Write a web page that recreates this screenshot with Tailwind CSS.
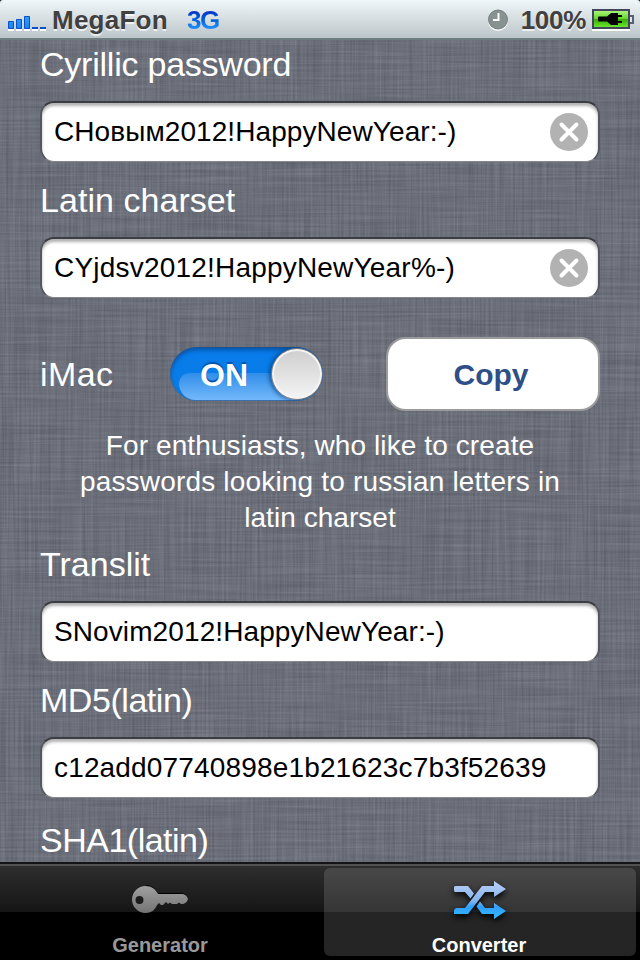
<!DOCTYPE html>
<html lang="en">
<head>
<meta charset="utf-8">
<title>Converter</title>
<script src="https://cdn.jsdelivr.net/npm/@tailwindcss/browser@4"></script>
</head>
<body class="bg-black font-['Liberation_Sans',Arial,sans-serif]">
<div class="relative flex h-[960px] w-[640px] flex-col overflow-hidden bg-[#6b6e79]">
  <!-- linen texture -->
  <svg class="absolute inset-0" width="640" height="960" aria-hidden="true">
    <filter id="weft" x="0" y="0" width="100%" height="100%" color-interpolation-filters="sRGB">
      <feTurbulence type="fractalNoise" baseFrequency="0.012 0.45" numOctaves="2" seed="4"/>
      <feColorMatrix values="1 0 0 0 0  1 0 0 0 0  1 0 0 0 0  0 0 0 0 1"/>
      <feComponentTransfer><feFuncR type="linear" slope=".22" intercept=".314"/><feFuncG type="linear" slope=".22" intercept=".328"/><feFuncB type="linear" slope=".22" intercept=".37"/></feComponentTransfer>
    </filter>
    <filter id="warp" x="0" y="0" width="100%" height="100%" color-interpolation-filters="sRGB">
      <feTurbulence type="fractalNoise" baseFrequency="0.45 0.01" numOctaves="2" seed="9"/>
      <feColorMatrix values="1 0 0 0 0  1 0 0 0 0  1 0 0 0 0  0 0 0 0 1"/>
      <feComponentTransfer><feFuncR type="linear" slope=".22" intercept=".314"/><feFuncG type="linear" slope=".22" intercept=".328"/><feFuncB type="linear" slope=".22" intercept=".37"/></feComponentTransfer>
    </filter>
    <rect width="640" height="960" filter="url(#weft)"/>
    <rect width="640" height="960" filter="url(#warp)" opacity=".5"/>
  </svg>

  <header class="relative flex h-10 shrink-0 items-center border-b-2 border-[#6f7c80] bg-linear-to-b from-[#f0f7fa] to-[#bcc5c9] text-[26px] font-bold leading-[38px] text-[#404040] [text-shadow:0_2px_0_#ffffffb0]">
    <svg class="absolute left-0 top-0" width="640" height="4"><path d="M0 0H3Q0 0 0 3zM640 0H637Q640 0 640 3z" fill="#222"/></svg>
    <svg class="ml-2 mt-[8px] shrink-0" width="40" height="20" viewBox="0 0 40 20">
      <defs><linearGradient id="sig" x2="0" y2="1"><stop stop-color="#2f9dff"/><stop offset="1" stop-color="#1b83ee"/></linearGradient></defs>
      <path d="M0 17h6M8 17h6M16 17h6M24 17h6M32 17h6" stroke="#fff" stroke-width="2"/>
      <g fill="url(#sig)" stroke="#0750c8"><path d="M.5 8.500h5v7h-5zM8.500 6.500h5v9h-5zM16.500 3.500h5v12h-5z"/></g>
      <path d="M24 15h6M32 15h6" stroke="#0b4fd0" stroke-width="2"/>
    </svg>
    <span class="ml-1 mt-[2px] w-[135px] tracking-[.25px]">MegaFon</span>
    <span class="mt-[2px] bg-linear-to-b from-[#0638c8] from-30% to-[#2b9cff] to-80% bg-clip-text pr-1 font-bold tracking-[-1.5px] text-transparent [text-shadow:none]">3G</span>
    <div class="ml-auto mr-[6px] flex h-full items-center">
      <svg class="mt-[2px]" width="22" height="24" viewBox="0 0 22 24">
        <circle cx="11" cy="13" r="10" fill="#fff"/><circle cx="11" cy="11.500" r="9.500" fill="#869391" stroke="#737f7e"/>
        <path d="M11.500 5v7H6" fill="none" stroke="#fff" stroke-width="2"/>
      </svg>
      <span class="ml-[12px] mt-[1px] tracking-[-.3px]">100%</span>
      <svg class="ml-[6px] mt-[2px]" width="42" height="22" viewBox="0 0 42 22">
        <defs><linearGradient id="bat" x2="0" y2="1"><stop stop-color="#b5f582"/><stop offset=".48" stop-color="#63d92b"/><stop offset=".5" stop-color="#35a909"/><stop offset="1" stop-color="#70ed2c"/></linearGradient></defs>
        <path d="M0 21h38" stroke="#fff" stroke-width="2"/>
        <rect x="1" y="1" width="36" height="18" fill="url(#bat)" stroke="#41465e" stroke-width="2"/>
        <path d="M38 7h3v7h-3" fill="#dfe6e9" stroke="#596074" stroke-width="2"/>
        <path d="M6 8.500q0-1 1-1h8l4-3.500h7v2h4v2h-4v4h4v2h-4v2h-7l-4-3.500H7q-1 0-1-1z" fill="#000"/>
      </svg>
    </div>
  </header>

  <main class="relative flex min-h-0 flex-1 flex-col overflow-hidden px-10 pt-1 text-white">
    <label class="h-10 shrink-0 text-[34px] leading-10 tracking-[-.23px]">Cyrillic password</label>
    <div class="mb-[18px] mt-[17px] flex h-[61px] shrink-0 items-center justify-between rounded-[14px] border-2 border-b border-[#55575f] border-b-[#85878c] border-t-[#3c3d43] bg-white pl-3 pr-[10px] text-[28px] leading-[56px] tracking-[.08px] text-black shadow-[inset_0_3px_3px_#0000004d]">
      <span>СНовым2012!HappyNewYear:-)</span>
      <svg width="38" height="38" viewBox="0 0 38 38"><circle cx="19" cy="19" r="19" fill="#b2b2b2"/><path d="M11.500 11.500l15 15m0-15l-15 15" stroke="#fff" stroke-width="4" stroke-linecap="round"/></svg>
    </div>

    <label class="h-10 shrink-0 text-[34px] leading-10 tracking-[.05px]">Latin charset</label>
    <div class="mt-[17px] flex h-[61px] shrink-0 items-center justify-between rounded-[14px] border-2 border-b border-[#55575f] border-b-[#85878c] border-t-[#3c3d43] bg-white pl-3 pr-[10px] text-[28px] leading-[56px] tracking-[.2px] text-black shadow-[inset_0_3px_3px_#0000004d]">
      <span>CYjdsv2012!HappyNewYear%-)</span>
      <svg width="38" height="38" viewBox="0 0 38 38"><circle cx="19" cy="19" r="19" fill="#b2b2b2"/><path d="M11.500 11.500l15 15m0-15l-15 15" stroke="#fff" stroke-width="4" stroke-linecap="round"/></svg>
    </div>

    <div class="mt-[39px] flex h-[74px] shrink-0 items-center">
      <span class="w-[130px] text-[34px] leading-10 tracking-[.4px]">iMac</span>
      <div class="relative h-[54px] w-[153px] overflow-hidden rounded-full bg-[#087ce8] shadow-[inset_0_3px_4px_#003f8fb0,inset_0_0_2px_1px_#52708f]">
        <div class="absolute bottom-[1px] left-[9px] h-[27px] w-[120px] rounded-bl-[22px] rounded-tl-[14px] bg-linear-to-b from-[#2d8eea] to-[#72b8fa]"></div>
        <span class="absolute left-[30px] top-0 text-[32px] font-bold leading-[56px] [text-shadow:0_-2px_1px_#0055a8]">ON</span>
        <div class="absolute right-0 top-[1px] size-[52px] rounded-full border border-[#77797e] bg-linear-to-b from-[#cecece] to-[#f5f5f5] shadow-[inset_0_0_0_2px_#f5f5f5,-2px_0_4px_#003878b0]"></div>
      </div>
      <button class="ml-auto h-[74px] w-[214px] rounded-[20px] border-2 border-[#9b9b9b] bg-white pt-[1px] text-[30px] font-bold text-[#2e4f88]"><span class="relative -left-[2px]">Copy</span></button>
    </div>

    <p class="-mx-2 mt-[17px] text-center text-[28px] leading-9 tracking-[.18px]"><span class="tracking-[.1px]">For enthusiasts, who like to create</span><br>passwords looking to russian letters in<br><span class="tracking-[.05px]">latin charset</span></p>

    <label class="mt-[8px] h-10 shrink-0 text-[34px] leading-10">Translit</label>
    <div class="mb-[18px] mt-[17px] flex h-[61px] shrink-0 items-center rounded-[14px] border-2 border-b border-[#55575f] border-b-[#85878c] border-t-[#3c3d43] bg-white pl-3 text-[28px] leading-[56px] tracking-[.1px] text-black shadow-[inset_0_3px_3px_#0000004d]">SNovim2012!HappyNewYear:-)</div>

    <label class="h-10 shrink-0 text-[34px] leading-10 tracking-[-.45px]">MD5(latin)</label>
    <div class="mb-[22px] mt-[17px] flex h-[61px] shrink-0 items-center rounded-[14px] border-2 border-b border-[#55575f] border-b-[#85878c] border-t-[#3c3d43] bg-white pl-3 text-[28px] leading-[56px] tracking-[.16px] text-black shadow-[inset_0_3px_3px_#0000004d]">c12add07740898e1b21623c7b3f52639</div>

    <label class="h-10 shrink-0 text-[34px] leading-10 tracking-[-.5px]">SHA1(latin)</label>
  </main>

  <nav class="relative flex h-[98px] shrink-0 border-t-2 border-[#141416] bg-[linear-gradient(#515151_0_2px,#2e2e2e_2px,#151515_48px,#000_48px)] text-[20px] font-bold leading-6">
    <div class="flex w-80 flex-col items-center pt-[21px] text-[#999]">
      <svg width="58" height="30" viewBox="0 0 58 30">
        <defs><linearGradient id="key" x2="0" y2="1"><stop stop-color="#a0a0a0"/><stop offset="1" stop-color="#747474"/></linearGradient></defs>
        <path d="M14.500 0C20 0 24 3 26.500 8H51Q56 9 57 13L52 16H26Z" fill="#000"/>
        <path d="M14.500 1C20.500 1 24.500 4 27 9H52Q56 10 57 14Q56 18 52 19H50L48 17.500L46 19H41L39 17.500L37 19L35 17L32 20H30L28 18L26 20C24 25 20 28 14.500 28A13.500 13.500 0 0 1 14.500 1zM8.500 11a4 4 0 1 0 0 8a4 4 0 1 0 0-8z" fill="url(#key)" fill-rule="evenodd"/>
      </svg>
      <span class="mt-[18px]">Generator</span>
    </div>
    <div class="ml-1 mt-1 flex h-[88px] w-[312px] flex-col items-center rounded-[6px] bg-[linear-gradient(#484848,#353535_44px,#252525_44px,#252525)] pt-[12px] text-white">
      <svg class="overflow-visible drop-shadow-[0_3px_3px_#000]" width="54" height="42" viewBox="0 0 54 42">
        <defs>
          <linearGradient id="shuffle" gradientUnits="userSpaceOnUse" x1="0" y1="2" x2="0" y2="40"><stop stop-color="#b8cef5"/><stop offset=".5" stop-color="#83b4ee"/><stop offset=".65" stop-color="#319eff"/><stop offset="1" stop-color="#35bcff"/></linearGradient>
        </defs>
        <g fill="url(#shuffle)">
          <path d="M2 6H15L21 13.500L17.500 18.500L12 12H2L1 11V7z"/>
          <path d="M1 30L3 28H12L29 6H41V1L53 9L41 17V12H32L15 34H1z"/>
          <path d="M27 21.500L32 28H41V23L53 31L41 39V34H29L23.500 26.500z"/>
        </g>
      </svg>
      <span class="mt-[11px] pr-[2px]">Converter</span>
    </div>
  </nav>
</div>
</body>
</html>
